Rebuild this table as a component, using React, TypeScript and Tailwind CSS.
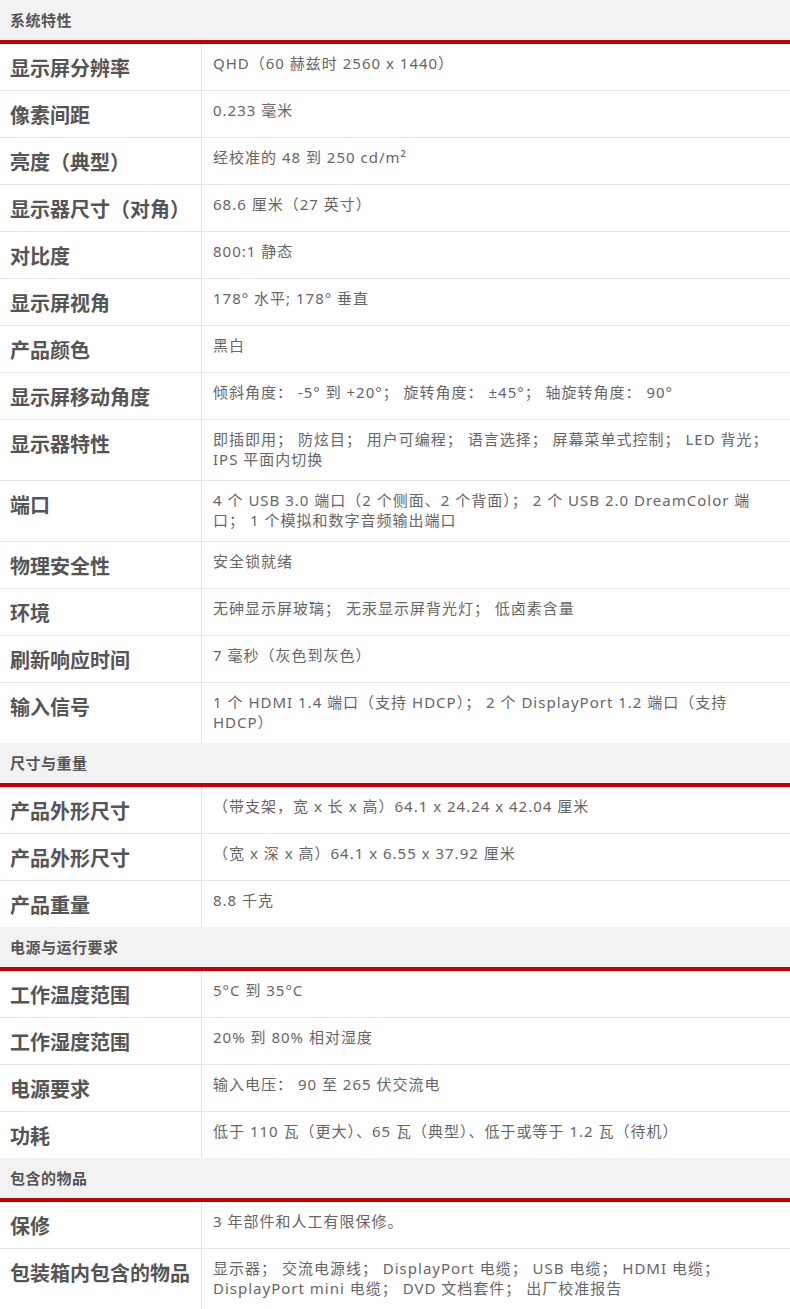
// SpecTable — product spec sheet, grouped sections with red rule under each heading.

type Row = { label: string; value: string }
type Section = { title: string; rows: Row[] }

const sections: Section[] = [
  {
    title: '系统特性',
    rows: [
      { label: '显示屏分辨率', value: 'QHD（60 赫兹时 2560 x 1440）' },
      { label: '像素间距', value: '0.233 毫米' },
      { label: '亮度（典型）', value: '经校准的 48 到 250 cd/m²' },
      { label: '显示器尺寸（对角）', value: '68.6 厘米（27 英寸）' },
      { label: '对比度', value: '800:1 静态' },
      { label: '显示屏视角', value: '178° 水平; 178° 垂直' },
      { label: '产品颜色', value: '黑白' },
      { label: '显示屏移动角度', value: '倾斜角度： -5° 到 +20°； 旋转角度： ±45°； 轴旋转角度： 90°' },
      {
        label: '显示器特性',
        value: '即插即用； 防炫目； 用户可编程； 语言选择； 屏幕菜单式控制； LED 背光； IPS 平面内切换',
      },
      {
        label: '端口',
        value: '4 个 USB 3.0 端口（2 个侧面、2 个背面）； 2 个 USB 2.0 DreamColor 端口； 1 个模拟和数字音频输出端口',
      },
      { label: '物理安全性', value: '安全锁就绪' },
      { label: '环境', value: '无砷显示屏玻璃； 无汞显示屏背光灯； 低卤素含量' },
      { label: '刷新响应时间', value: '7 毫秒（灰色到灰色）' },
      {
        label: '输入信号',
        value: '1 个 HDMI 1.4 端口（支持 HDCP）； 2 个 DisplayPort 1.2 端口（支持 HDCP）',
      },
    ],
  },
  {
    title: '尺寸与重量',
    rows: [
      { label: '产品外形尺寸', value: '（带支架，宽 x 长 x 高）64.1 x 24.24 x 42.04 厘米' },
      { label: '产品外形尺寸', value: '（宽 x 深 x 高）64.1 x 6.55 x 37.92 厘米' },
      { label: '产品重量', value: '8.8 千克' },
    ],
  },
  {
    title: '电源与运行要求',
    rows: [
      { label: '工作温度范围', value: '5°C 到 35°C' },
      { label: '工作湿度范围', value: '20% 到 80% 相对湿度' },
      { label: '电源要求', value: '输入电压： 90 至 265 伏交流电' },
      { label: '功耗', value: '低于 110 瓦（更大）、65 瓦（典型）、低于或等于 1.2 瓦（待机）' },
    ],
  },
  {
    title: '包含的物品',
    rows: [
      { label: '保修', value: '3 年部件和人工有限保修。' },
      {
        label: '包装箱内包含的物品',
        value: '显示器； 交流电源线； DisplayPort 电缆； USB 电缆； HDMI 电缆； DisplayPort mini 电缆； DVD 文档套件； 出厂校准报告',
      },
    ],
  },
]

function SpecSection({ section }: { section: Section }) {
  return (
    <section>
      <h2 className="h-[44px] bg-[#f2f2f2] px-[10px] text-[15px] font-bold leading-10 tracking-[0.5px] text-[#555] border-b-[4px] border-[#c40000]">
        {section.title}
      </h2>
      {section.rows.map((row, i) => (
        <div
          key={i}
          className={`grid grid-cols-[202px_1fr] ${i < section.rows.length - 1 ? 'border-b border-[#e6e6e6]' : ''}`}
        >
          <div className="border-r border-[#e6e6e6] pl-[10px] pt-[11px] pb-[7px] text-[20px] font-bold leading-[28px] text-[#555]">
            {row.label}
          </div>
          <div className="pl-[11px] pr-2 pt-[9px] pb-[11px] text-[15px] leading-[20px] tracking-[1px] text-[#666]">
            {row.value}
          </div>
        </div>
      ))}
    </section>
  )
}

export default function App() {
  return (
    <div
      className="w-[790px] bg-white"
      style={{ fontFamily: '"Noto Sans", "Noto Sans CJK SC", sans-serif' }}
    >
      {sections.map((s) => (
        <SpecSection key={s.title} section={s} />
      ))}
    </div>
  )
}
